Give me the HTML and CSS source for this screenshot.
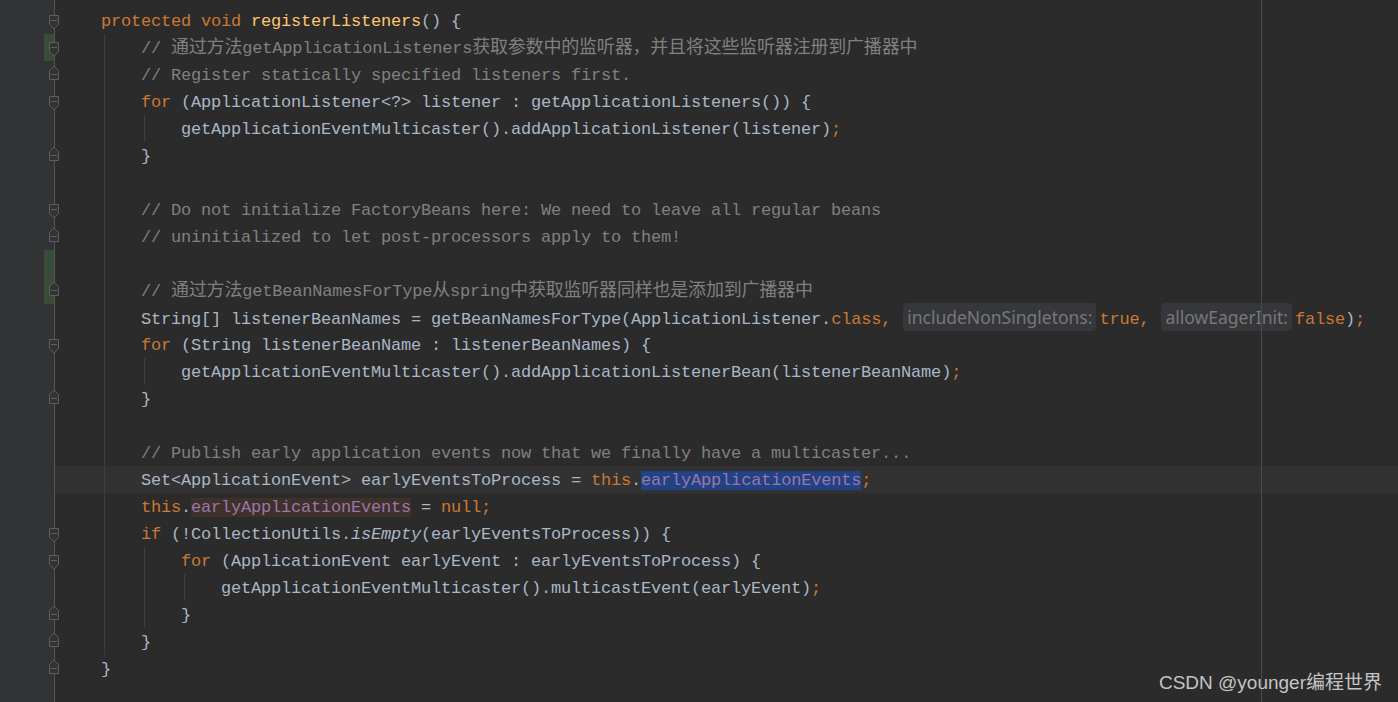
FILE: index.html
```html
<!DOCTYPE html>
<html lang="zh">

<head>
  <meta charset="UTF-8" />
  <title>registerListeners</title>
  <link rel="stylesheet" href="styles.css">
</head>

<body>
  <div class="editor">
    <div class="line"><div class="gut"></div><div class="src"><span class="doc"> */</span></div></div>
    <div class="line"><div class="gut"><svg class="fold down" width="12" height="16" viewBox="0 0 12 16"><path d="M1.5 0.5H10.5V9.5L6 14L1.5 9.5Z"/><path d="M3 5.5H9"/></svg></div><div class="src"><span><span class="kw">protected void </span><span class="fn">registerListeners</span>() {</span></div></div>
    <div class="line"><div class="gut chg"><svg class="fold down" width="12" height="16" viewBox="0 0 12 16"><path d="M1.5 0.5H10.5V9.5L6 14L1.5 9.5Z"/><path d="M3 5.5H9"/></svg></div><div class="src"><i class="ig"></i><span class="cm">// <span class="zh">通过方法</span>getApplicationListeners<span class="zh">获取参数中的监听器，并且将这些监听器注册到广播器中</span></span></div></div>
    <div class="line"><div class="gut"><svg class="fold up" width="12" height="16" viewBox="0 0 12 16"><path d="M1.5 15.5H10.5V6.5L6 2L1.5 6.5Z"/><path d="M3 10.5H9"/></svg></div><div class="src"><i class="ig"></i><span class="cm">// Register statically specified listeners first.</span></div></div>
    <div class="line"><div class="gut"><svg class="fold down" width="12" height="16" viewBox="0 0 12 16"><path d="M1.5 0.5H10.5V9.5L6 14L1.5 9.5Z"/><path d="M3 5.5H9"/></svg></div><div class="src"><i class="ig"></i><span><span class="kw">for </span>(ApplicationListener&lt;?&gt; listener : getApplicationListeners()) {</span></div></div>
    <div class="line"><div class="gut"></div><div class="src"><i class="ig"></i><i class="ig"></i><span>getApplicationEventMulticaster().addApplicationListener(listener)<span class="kw">;</span></span></div></div>
    <div class="line"><div class="gut"><svg class="fold up" width="12" height="16" viewBox="0 0 12 16"><path d="M1.5 15.5H10.5V6.5L6 2L1.5 6.5Z"/><path d="M3 10.5H9"/></svg></div><div class="src"><i class="ig"></i><span>}</span></div></div>
    <div class="line"><div class="gut"></div><div class="src"><i class="ig"></i></div></div>
    <div class="line"><div class="gut"><svg class="fold down" width="12" height="16" viewBox="0 0 12 16"><path d="M1.5 0.5H10.5V9.5L6 14L1.5 9.5Z"/><path d="M3 5.5H9"/></svg></div><div class="src"><i class="ig"></i><span class="cm">// Do not initialize FactoryBeans here: We need to leave all regular beans</span></div></div>
    <div class="line"><div class="gut"><svg class="fold up" width="12" height="16" viewBox="0 0 12 16"><path d="M1.5 15.5H10.5V6.5L6 2L1.5 6.5Z"/><path d="M3 10.5H9"/></svg></div><div class="src"><i class="ig"></i><span class="cm">// uninitialized to let post-processors apply to them!</span></div></div>
    <div class="line"><div class="gut chg"></div><div class="src"><i class="ig"></i></div></div>
    <div class="line"><div class="gut chg"><svg class="fold up" width="12" height="16" viewBox="0 0 12 16"><path d="M1.5 15.5H10.5V6.5L6 2L1.5 6.5Z"/><path d="M3 10.5H9"/></svg></div><div class="src"><i class="ig"></i><span class="cm">// <span class="zh">通过方法</span>getBeanNamesForType<span class="zh">从</span>spring<span class="zh">中获取监听器同样也是添加到广播器中</span></span></div></div>
    <div class="line"><div class="gut"></div><div class="src"><i class="ig"></i><span>String[] listenerBeanNames = getBeanNamesForType(ApplicationListener.<span class="kw">class,</span> <span class="hint">includeNonSingletons:</span><span class="kw">true, </span><span class="hint">allowEagerInit:</span><span class="kw">false</span>)<span class="kw">;</span></span></div></div>
    <div class="line"><div class="gut"><svg class="fold down" width="12" height="16" viewBox="0 0 12 16"><path d="M1.5 0.5H10.5V9.5L6 14L1.5 9.5Z"/><path d="M3 5.5H9"/></svg></div><div class="src"><i class="ig"></i><span><span class="kw">for </span>(String listenerBeanName : listenerBeanNames) {</span></div></div>
    <div class="line"><div class="gut"></div><div class="src"><i class="ig"></i><i class="ig"></i><span>getApplicationEventMulticaster().addApplicationListenerBean(listenerBeanName)<span class="kw">;</span></span></div></div>
    <div class="line"><div class="gut"><svg class="fold up" width="12" height="16" viewBox="0 0 12 16"><path d="M1.5 15.5H10.5V6.5L6 2L1.5 6.5Z"/><path d="M3 10.5H9"/></svg></div><div class="src"><i class="ig"></i><span>}</span></div></div>
    <div class="line"><div class="gut"></div><div class="src"><i class="ig"></i></div></div>
    <div class="line"><div class="gut"></div><div class="src"><i class="ig"></i><span class="cm">// Publish early application events now that we finally have a multicaster...</span></div></div>
    <div class="line cur"><div class="gut"></div><div class="src"><i class="ig"></i><span>Set&lt;ApplicationEvent&gt; earlyEventsToProcess = <span class="kw">this</span>.<span class="field sel">earlyApplicationEvents</span><span class="kw">;</span></span></div></div>
    <div class="line"><div class="gut"></div><div class="src"><i class="ig"></i><span><span class="kw">this</span>.<span class="field wr">earlyApplicationEvents</span> = <span class="kw">null;</span></span></div></div>
    <div class="line"><div class="gut"><svg class="fold down" width="12" height="16" viewBox="0 0 12 16"><path d="M1.5 0.5H10.5V9.5L6 14L1.5 9.5Z"/><path d="M3 5.5H9"/></svg></div><div class="src"><i class="ig"></i><span><span class="kw">if </span>(!CollectionUtils.<span class="st">isEmpty</span>(earlyEventsToProcess)) {</span></div></div>
    <div class="line"><div class="gut"><svg class="fold down" width="12" height="16" viewBox="0 0 12 16"><path d="M1.5 0.5H10.5V9.5L6 14L1.5 9.5Z"/><path d="M3 5.5H9"/></svg></div><div class="src"><i class="ig"></i><i class="ig"></i><span><span class="kw">for </span>(ApplicationEvent earlyEvent : earlyEventsToProcess) {</span></div></div>
    <div class="line"><div class="gut"></div><div class="src"><i class="ig"></i><i class="ig"></i><i class="ig"></i><span>getApplicationEventMulticaster().multicastEvent(earlyEvent)<span class="kw">;</span></span></div></div>
    <div class="line"><div class="gut"><svg class="fold up" width="12" height="16" viewBox="0 0 12 16"><path d="M1.5 15.5H10.5V6.5L6 2L1.5 6.5Z"/><path d="M3 10.5H9"/></svg></div><div class="src"><i class="ig"></i><i class="ig"></i><span>}</span></div></div>
    <div class="line"><div class="gut"><svg class="fold up" width="12" height="16" viewBox="0 0 12 16"><path d="M1.5 15.5H10.5V6.5L6 2L1.5 6.5Z"/><path d="M3 10.5H9"/></svg></div><div class="src"><i class="ig"></i><span>}</span></div></div>
    <div class="line"><div class="gut"><svg class="fold up" width="12" height="16" viewBox="0 0 12 16"><path d="M1.5 15.5H10.5V6.5L6 2L1.5 6.5Z"/><path d="M3 10.5H9"/></svg></div><div class="src"><span>}</span></div></div>
  </div>
  <div class="wm">CSDN @younger编程世界</div>
</body>

</html>
```

FILE: styles.css
```css
body {
  margin: 0;
  height: 702px;
  overflow: hidden;
  background: #2b2b2b;
  color: #a9b7c6;
  font-family: "Liberation Mono", "Noto Sans CJK SC", monospace;
  font-size: 17px;
  letter-spacing: -0.2px;
}

.editor {
  position: relative;
  margin-top: -20px;
  height: 722px;
  background: linear-gradient(90deg, #313335 54px, #555 54px, #555 55px, #2b2b2b 55px);
}

/* right margin guide */
.editor::after {
  content: "";
  position: absolute;
  left: 1261px;
  top: 0;
  bottom: 0;
  width: 1px;
  background: #4b4b4b;
}

.line {
  display: flex;
  height: 27px;
}

.gut {
  position: relative;
  flex: none;
  width: 55px;
}

.gut.chg {
  background: linear-gradient(90deg, transparent 44px, #384c38 44px, #384c38 54px, transparent 54px);
}

.fold {
  position: absolute;
  left: 48px;
  fill: #313335;
  stroke: #5e5e5e;
  stroke-width: 1;
}

.fold.down {
  top: 8px;
}

.fold.up {
  top: 3px;
}

.src {
  flex: 1;
  display: flex;
  align-items: center;
  padding-left: 46px;
  padding-top: 2px;
  white-space: pre;
  line-height: 20px;
}

.line.cur .src {
  background: #323232;
}

.ig {
  flex: none;
  width: 40px;
  align-self: stretch;
  margin-top: -2px;
  background: linear-gradient(#3d3d3d, #3d3d3d) 3px 0 / 1px 100% no-repeat;
}

.kw {
  color: #cc7832;
}

.fn {
  color: #ffc66d;
}

.cm {
  color: #808080;
}

.doc {
  color: #629755;
}

.zh {
  font-size: 18px;
}

.field {
  color: #9876aa;
}

.sel {
  background: #214283;
}

.wr {
  background: #3f3129;
}

.st {
  font-style: italic;
}

.hint {
  margin: 0 3px 0 2px;
  padding: 2px 4px;
  border-radius: 4px;
  background: #35373a;
  color: #787878;
  font-family: "Noto Sans", sans-serif;
  font-size: 17.5px;
  letter-spacing: 0;
}

.wm {
  position: absolute;
  right: 16px;
  bottom: 8px;
  color: #c4c4c4;
  font-family: "Liberation Sans", "Noto Sans CJK SC", sans-serif;
  font-size: 19px;
  letter-spacing: 0;
}
```
